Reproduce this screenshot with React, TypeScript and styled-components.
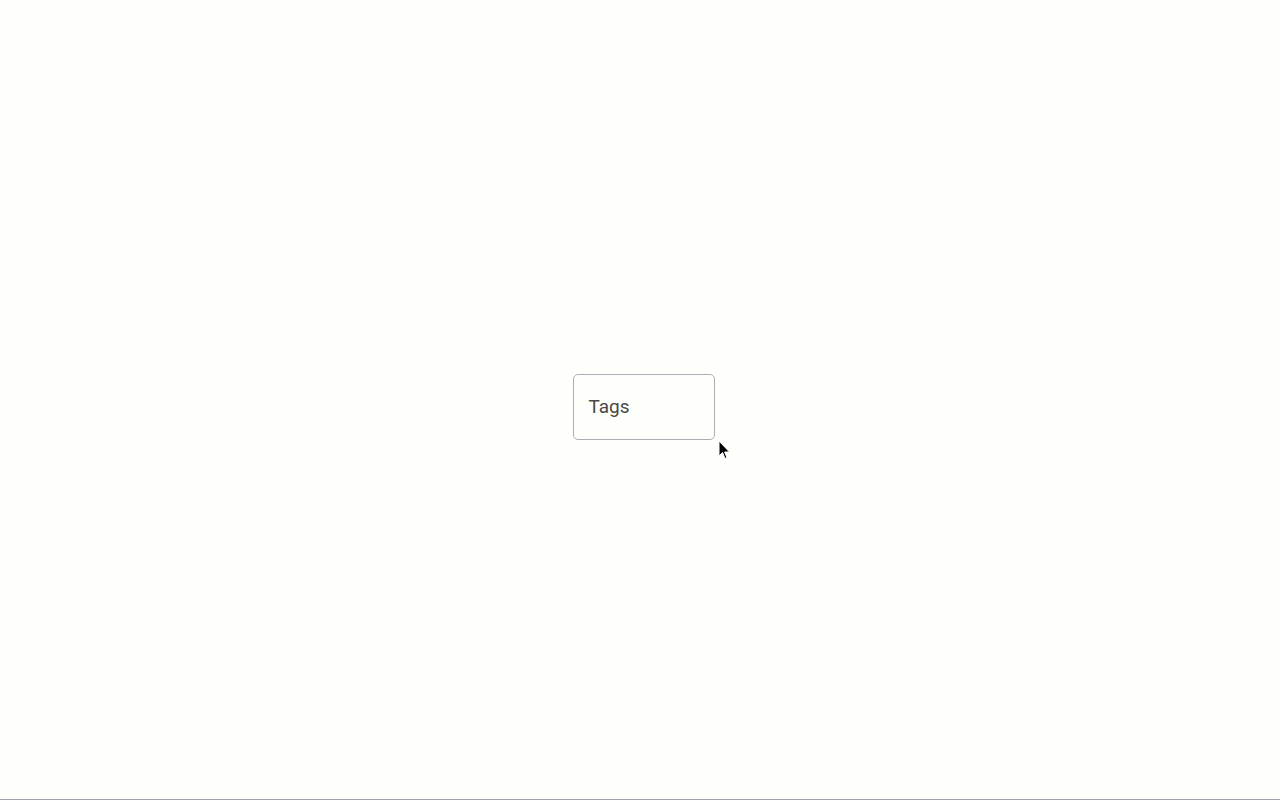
import React from "react";
import styled, { createGlobalStyle } from "styled-components";

const Global = createGlobalStyle`
  html, body { margin: 0; padding: 0; }
  body { background: #fefefa; font-family: Roboto, "Noto Sans", sans-serif; }
`;

const Page = styled.div`
  position: relative;
  width: 1280px;
  height: 800px;
  box-sizing: border-box;
  display: flex;
  flex-direction: column;
  background: #fefefa;
`;

const Stage = styled.div`
  flex: 1;
  display: flex;
  align-items: center;
  justify-content: center;
  padding: 14px 0 0 7px;
`;

const TagBox = styled.div`
  box-sizing: border-box;
  width: 142px;
  height: 66px;
  border: 1px solid #adadb3;
  border-radius: 5px;
  display: flex;
  align-items: center;
  padding: 0 0 0 15px;
  color: #484848;
  font-size: 19px;
  font-family: Roboto, sans-serif;
`;

const BottomLine = styled.div`
  height: 1px;
  background: #a0a0a8;
`;

const Cursor = styled.svg`
  position: absolute;
  left: 718px;
  top: 440px;
`;

export default function App() {
  return (
    <Page>
      <Global />
      <Stage>
        <TagBox>Tags</TagBox>
      </Stage>
      <BottomLine />
      <Cursor width="14" height="22" viewBox="0 0 14 22">
        <path d="M1 1 L1 16 L4.5 12.5 L7 18.5 L9 17.6 L6.6 12 L11.5 12 Z" fill="#000" stroke="#fff" strokeWidth="1" />
      </Cursor>
    </Page>
  );
}
